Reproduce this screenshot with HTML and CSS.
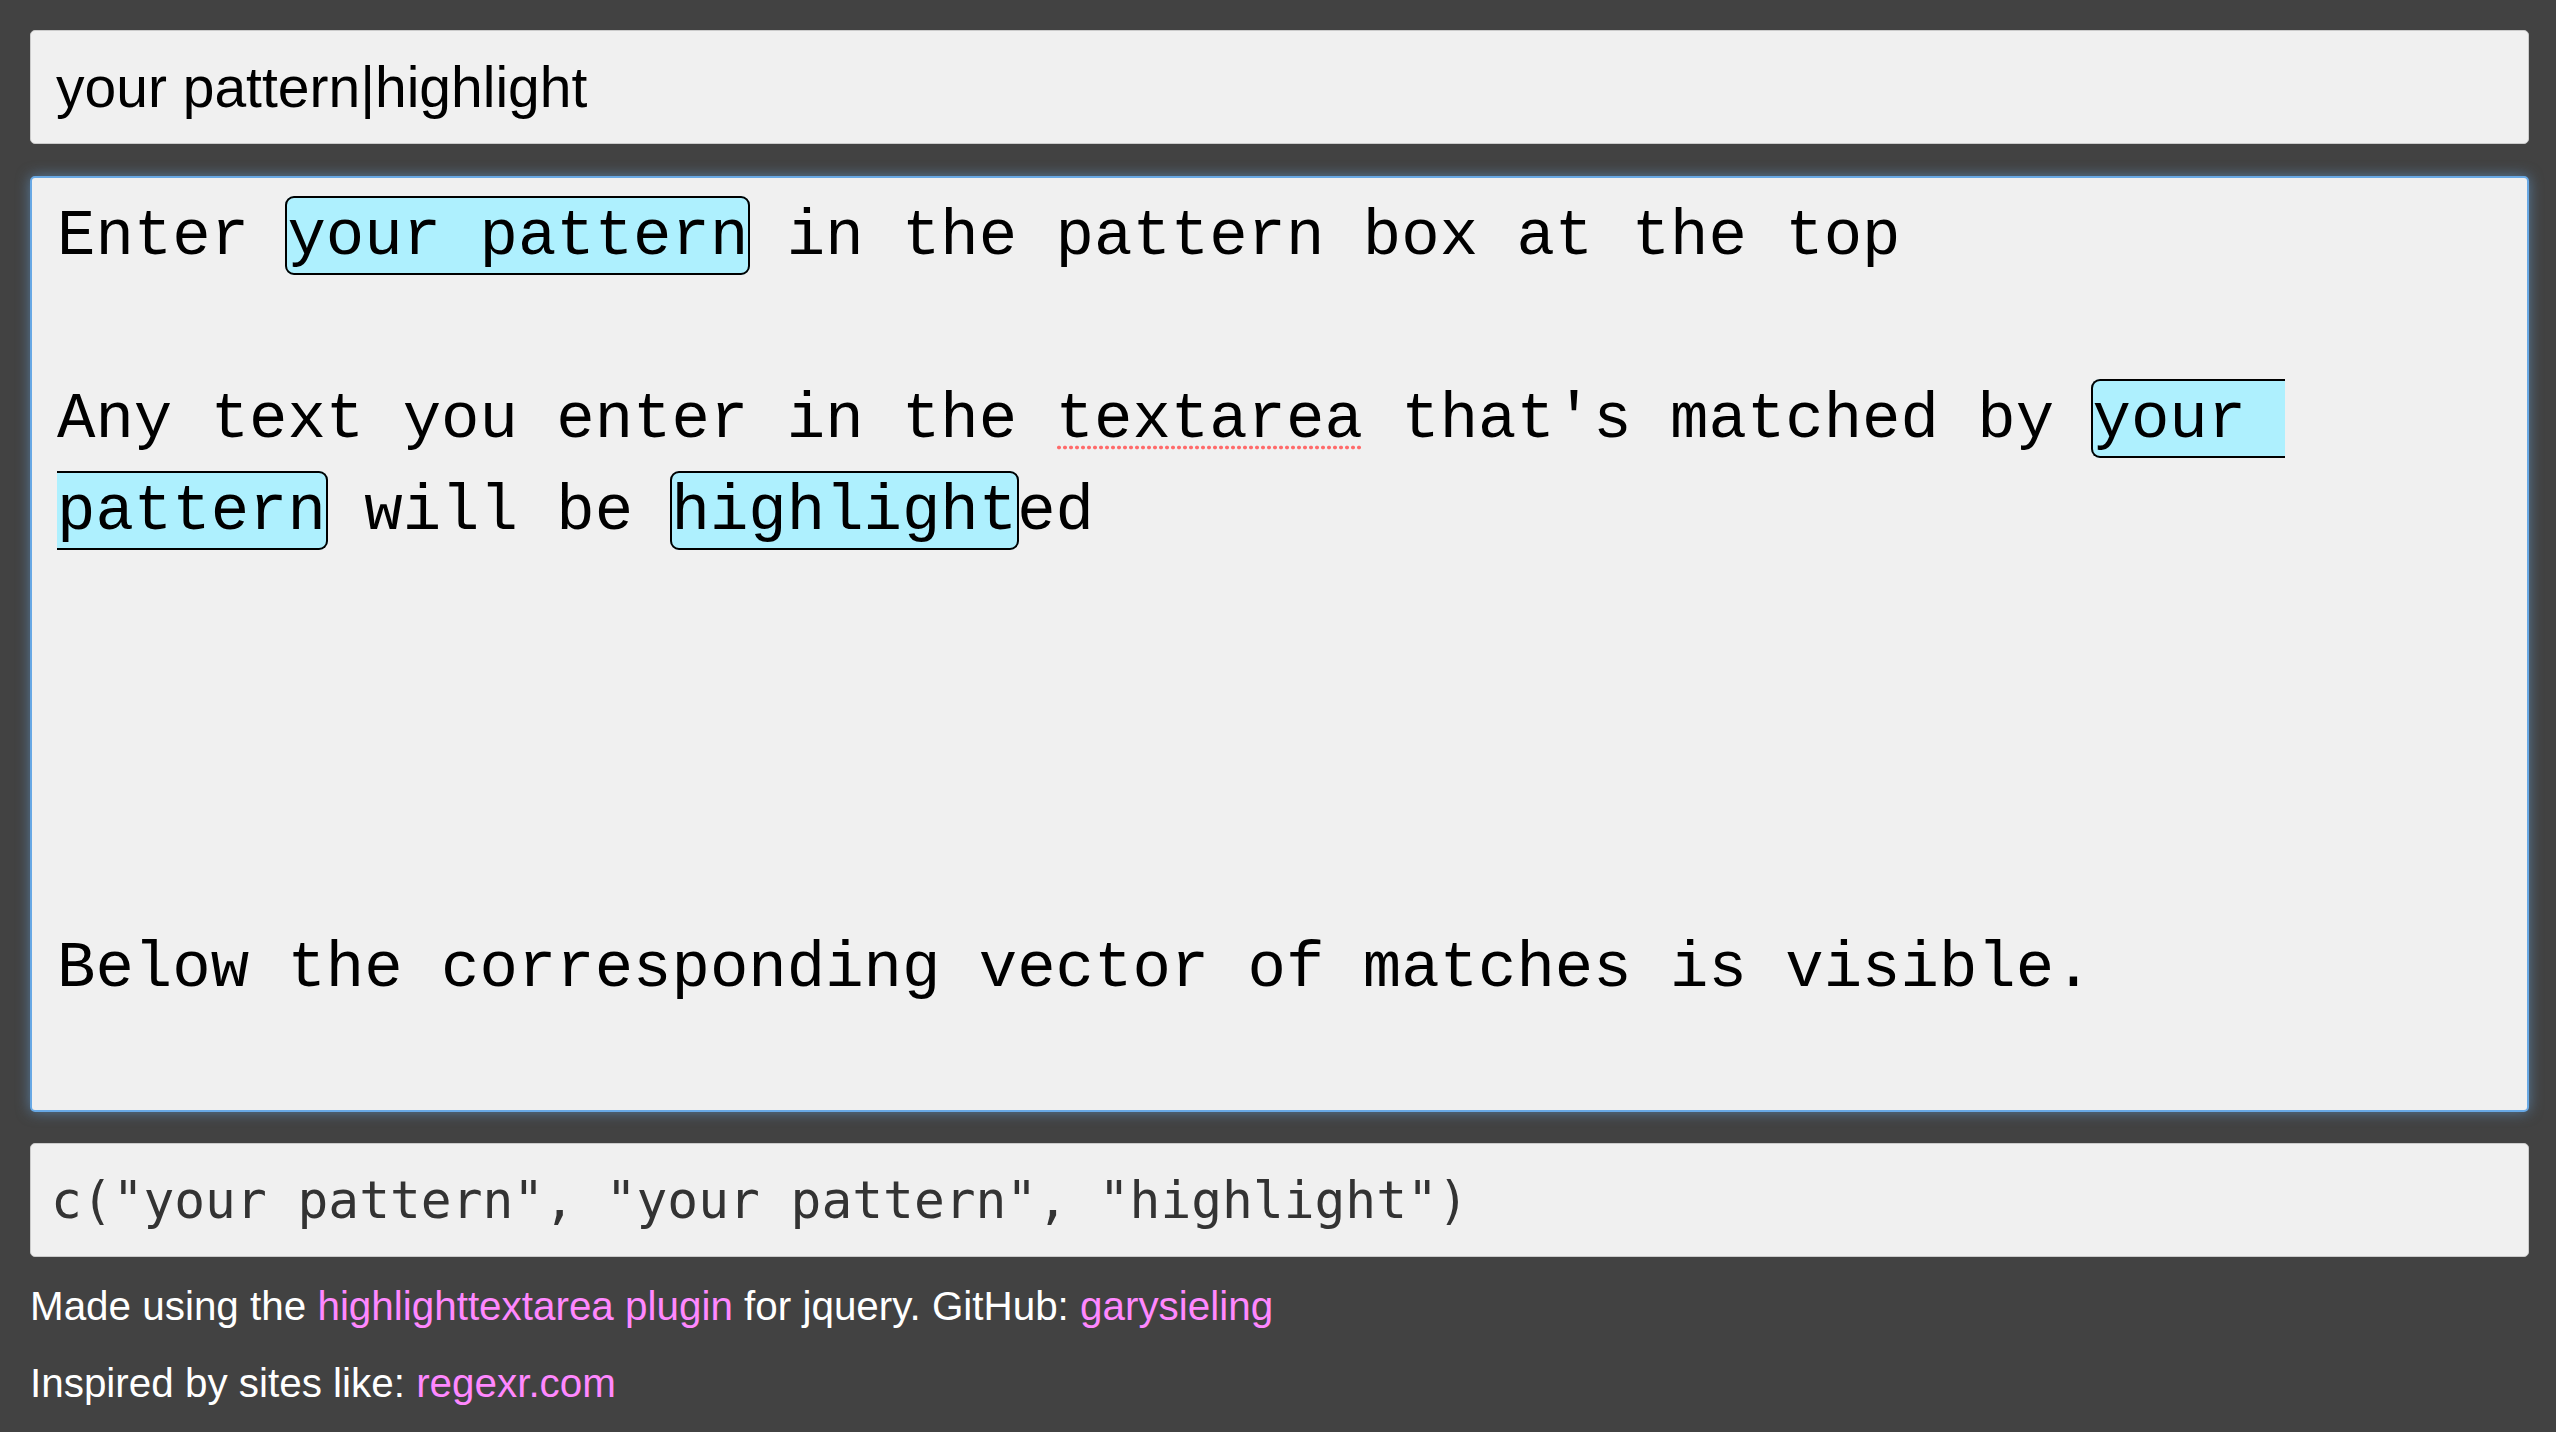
FILE: index.html
```html
<!DOCTYPE html>
<html>
<head>
<meta charset="utf-8">
<title>Regex highlighter</title>
<link rel="stylesheet" href="styles.css">
</head>
<body>
<div class="page">
  <div class="pattern">your pattern|highlight</div>
  <div class="editor">Enter <mark class="hl">your pattern</mark> in the pattern box at the top

Any text you enter in the <span class="spell">textarea</span> that's matched by <mark class="hl">your pattern</mark> will be <mark class="hl">highlight</mark>ed




Below the corresponding vector of matches is visible.</div>
  <div class="output">c("your pattern", "your pattern", "highlight")</div>
  <div class="footer">
    <p class="note">Made using the <a class="link" href="#">highlighttextarea plugin</a> for jquery. GitHub: <a class="link" href="#">garysieling</a></p>
    <p class="note">Inspired by sites like: <a class="link" href="#">regexr.com</a></p>
  </div>
</div>
</body>
</html>
```
FILE: styles.css
```css
html, body {
  margin: 0;
  padding: 0;
  background: #424242;
}

.page {
  display: flex;
  flex-direction: column;
  padding: 30px 27px 0 30px;
}

.pattern {
  box-sizing: border-box;
  height: 114px;
  display: flex;
  align-items: center;
  padding: 0 25px;
  background: #f0f0f0;
  border: 1px solid #cbcbcb;
  border-radius: 5px;
  font-family: "Liberation Sans", Arial, sans-serif;
  font-size: 57px;
  color: #000;
}

.editor {
  box-sizing: border-box;
  margin-top: 32px;
  height: 936px;
  padding: 14px 25px;
  background: #f0f0f0;
  border: 2px solid #68a8e4;
  border-radius: 5px;
  box-shadow: 0 0 14px rgba(104, 168, 228, 0.55);
  font-family: "Courier New", Courier, "Nimbus Mono PS", "Nimbus Mono L", FreeMono, "Liberation Mono", monospace;
  font-size: 64px;
  line-height: 91.5px;
  color: #000;
  white-space: break-spaces;
  overflow: hidden;
}

.hl {
  background: #aef0fe;
  color: #000;
  border: 2px solid #000;
  border-radius: 9px;
  margin: 0 -2px;
  padding: 3px 0 0;
}

.spell {
  background-image: radial-gradient(circle, #ff6b6b 1.6px, transparent 2.2px);
  background-size: 6px 5px;
  background-repeat: repeat-x;
  background-position: 0 calc(100% - 6px);
}

.output {
  box-sizing: border-box;
  margin-top: 31px;
  height: 114px;
  display: flex;
  align-items: center;
  padding: 0 20px;
  background: #f0f0f0;
  border: 1px solid #cbcbcb;
  border-radius: 5px;
  font-family: "DejaVu Sans Mono", monospace;
  font-size: 51.2px;
  color: #333;
  white-space: pre;
}

.footer {
  display: flex;
  flex-direction: column;
  gap: 32px;
  margin-top: 27px;
}

.note {
  margin: 0;
  font-family: "Liberation Sans", Arial, sans-serif;
  font-size: 40.4px;
  line-height: 45px;
  color: #fff;
}

.link {
  color: #ff88ff;
  text-decoration: none;
}
```
